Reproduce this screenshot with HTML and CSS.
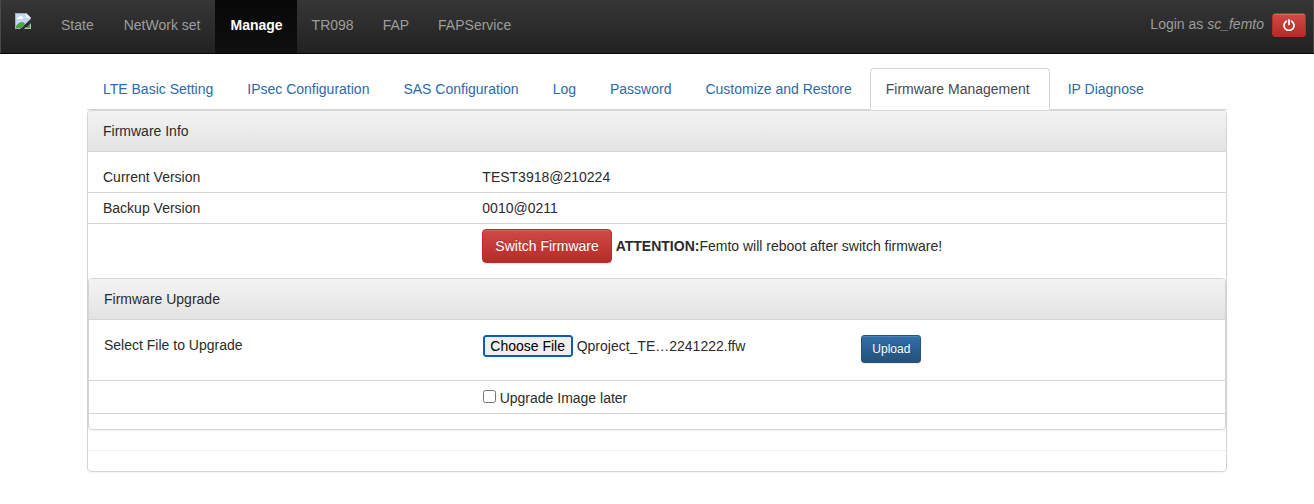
FILE: index.html
```html
<!DOCTYPE html>
<html lang="en">
<head>
<meta charset="utf-8">
<title>Firmware Management</title>
<link rel="stylesheet" href="styles.css">
</head>
<body>
<header class="navbar">
  <a class="brand" href="#" aria-label="Home">
    <svg width="16" height="16" viewBox="0 0 16 16" aria-hidden="true">
      <path d="M0 0H11L16 5V6L5 16H0Z" fill="#a9adb3"/>
      <path d="M1 1H11V5H15V6L6 15H1Z" fill="#c3d6f7"/>
      <path d="M2 6Q2 4 4 4Q5 2 7 3Q8 4 8 6Z" fill="#fff"/>
      <path d="M1 15V13Q4 9 7 9Q9 9 10 11L6 15Z" fill="#4ca53c"/>
      <path d="M11 0L16 5H11Z" fill="#f3f3f3"/>
      <path d="M16 10V16H9L11 14H15V11Z" fill="#b5bdc2"/>
      <path d="M15 11V15H11Z" fill="#4ca53c"/>
    </svg>
  </a>
  <nav class="menu">
    <a class="menu-link" href="#">State</a>
    <a class="menu-link" href="#">NetWork set</a>
    <a class="menu-link menu-link-active" href="#">Manage</a>
    <a class="menu-link" href="#">TR098</a>
    <a class="menu-link" href="#">FAP</a>
    <a class="menu-link" href="#">FAPService</a>
  </nav>
  <div class="session">
    <span>Login as <em>sc_femto</em></span>
    <button class="btn btn-danger btn-power" type="button" aria-label="Log out">
      <svg width="12" height="12" viewBox="0 0 12 12" fill="none" stroke="#fff" stroke-width="1.7" stroke-linecap="round" aria-hidden="true">
        <path d="M3.4 2.2A5 5 0 1 0 8.6 2.2M6 .9V5.4"/>
      </svg>
    </button>
  </div>
</header>

<main class="container">
  <nav class="tabs">
    <a class="tab" href="#">LTE Basic Setting</a>
    <a class="tab" href="#">IPsec Configuration</a>
    <a class="tab" href="#">SAS Configuration</a>
    <a class="tab" href="#">Log</a>
    <a class="tab" href="#">Password</a>
    <a class="tab" href="#">Customize and Restore</a>
    <a class="tab tab-active" href="#">Firmware Management</a>
    <a class="tab" href="#">IP Diagnose</a>
  </nav>

  <section class="panel">
    <h2 class="panel-heading">Firmware Info</h2>
    <div class="panel-body">
      <div class="row">
        <div class="cell">Current Version</div>
        <div class="cell">TEST3918@210224</div>
      </div>
      <div class="row">
        <div class="cell">Backup Version</div>
        <div class="cell">0010@0211</div>
      </div>
      <div class="row row-last">
        <div class="cell"></div>
        <div class="cell cell-wide"><button class="btn btn-danger" type="button">Switch Firmware</button> <strong>ATTENTION:</strong>Femto will reboot after switch firmware!</div>
      </div>
    </div>

    <form class="panel">
      <h2 class="panel-heading">Firmware Upgrade</h2>
      <div class="panel-body">
        <div class="row row-file">
          <label class="cell" for="firmware">Select File to Upgrade</label>
          <div class="cell file">
            <input class="file-input" id="firmware" type="file">
            <output for="firmware">Qproject_TE…2241222.ffw</output>
          </div>
          <div class="cell"><button class="btn btn-primary" type="button">Upload</button></div>
        </div>
        <div class="row row-check">
          <div class="cell"></div>
          <div class="cell check">
            <input class="check-input" id="later" type="checkbox">
            <label for="later">Upgrade Image later</label>
          </div>
        </div>
      </div>
    </form>
    <hr class="divider">
  </section>
</main>
</body>
</html>
```
FILE: styles.css
```css
* {
  box-sizing: border-box;
}

body {
  margin: 0;
  background: #fff;
  color: #2b2b2b;
  font-family: "Liberation Sans", Arial, sans-serif;
  font-size: 14px;
  line-height: 20px;
}

a {
  color: #337ab7;
  text-decoration: none;
}

.navbar {
  display: flex;
  align-items: stretch;
  border: 1px solid #080808;
  border-width: 0 0 1px;
  background: linear-gradient(#363636, #222);
  box-shadow: inset 1px 0 #4a4a4a, inset -1px 0 #4a4a4a;
  color: #9d9d9d;
}

.brand {
  padding: 13px 15px 0;
}

.brand svg {
  display: block;
}

.menu {
  display: flex;
}

.menu-link {
  padding: 15px 15px 18px;
  color: #9d9d9d;
}

.menu-link-active {
  padding: 15px 14px 18px 15px;
  background: linear-gradient(#080808, #0f0f0f);
  color: #fff;
  font-weight: bold;
}

.menu-link-active ~ .menu-link {
  padding-right: 14px;
}

.session {
  display: flex;
  align-items: flex-start;
  gap: 8px;
  margin-left: auto;
  padding: 13px 8px 0;
  line-height: 22px;
}

.btn {
  padding: 6px 12px;
  border: 1px solid;
  border-radius: 4px;
  box-shadow: inset 0 1px 0 rgba(255, 255, 255, 0.15), 0 1px 1px rgba(0, 0, 0, 0.08);
  color: #fff;
  font: inherit;
  text-shadow: 0 -1px 0 rgba(0, 0, 0, 0.2);
}

.btn-danger {
  border-color: #b92c28;
  background: linear-gradient(#d14a47, #b52b27);
}

.btn-power {
  display: flex;
  justify-content: center;
  width: 34px;
  border-radius: 3px;
  padding: 5px;
}

.btn-primary {
  padding: 4px 10px;
  border-color: #245580;
  border-radius: 3px;
  background: linear-gradient(#2f70aa, #245078);
  font-size: 12px;
  line-height: 18px;
}

.container {
  max-width: 1170px;
  margin: 0 auto;
  padding: 14px 15px 32px;
}

.tabs {
  display: flex;
  border-bottom: 1px solid #d5d5d5;
}

.tab {
  margin: 0 2px -1px 0;
  padding: 10px 15px;
  border: 1px solid transparent;
  border-radius: 4px 4px 0 0;
  white-space: nowrap;
  color: #2a6aad;
}

.tab-active {
  padding-right: 19px;
  border-color: #d5d5d5;
  border-bottom-color: #fff;
  background: #fff;
  color: #4a4a4a;
}

.panel {
  border: 1px solid #d5d5d5;
  border-radius: 4px;
  box-shadow: 0 1px 2px rgba(0, 0, 0, 0.05);
}

.panel-heading {
  margin: 0;
  padding: 10px 15px;
  border-bottom: 1px solid #d5d5d5;
  border-radius: 3px 3px 0 0;
  background: linear-gradient(#f3f3f3, #e3e3e3);
  font-size: 14px;
  font-weight: normal;
}

.panel-body {
  padding: 10px 0 15px;
}

.row {
  display: grid;
  grid-template-columns: repeat(3, 1fr);
  padding: 5px 0;
  border-bottom: 1px solid #d5d5d5;
}

.row-last {
  padding-bottom: 0;
  border-bottom: 0;
}

.row-file {
  padding-bottom: 17px;
}

.row-check {
  padding: 7px 0 5px;
}

.cell {
  padding: 0 15px;
}

.cell-wide {
  grid-column: span 2;
}

.file {
  display: flex;
  align-items: flex-start;
  gap: 4px;
  line-height: 22px;
}

.file-input {
  width: 90px;
  overflow: hidden;
  border-radius: 3px;
  color: transparent;
  font: inherit;
}

.file-input::file-selector-button {
  width: 90px;
  height: 22px;
  margin: 0;
  padding: 0;
  border: 2px solid #0f5bb8;
  border-radius: 3px;
  background: #efefef;
  color: #000;
  font: inherit;
  line-height: 18px;
}

.check {
  display: flex;
  align-items: flex-start;
  gap: 4px;
}

.check-input {
  width: 13px;
  height: 13px;
  margin: 2px 0 0;
}

.divider {
  margin: 20px 0;
  border: 0;
  border-top: 1px solid #eee;
}
```
